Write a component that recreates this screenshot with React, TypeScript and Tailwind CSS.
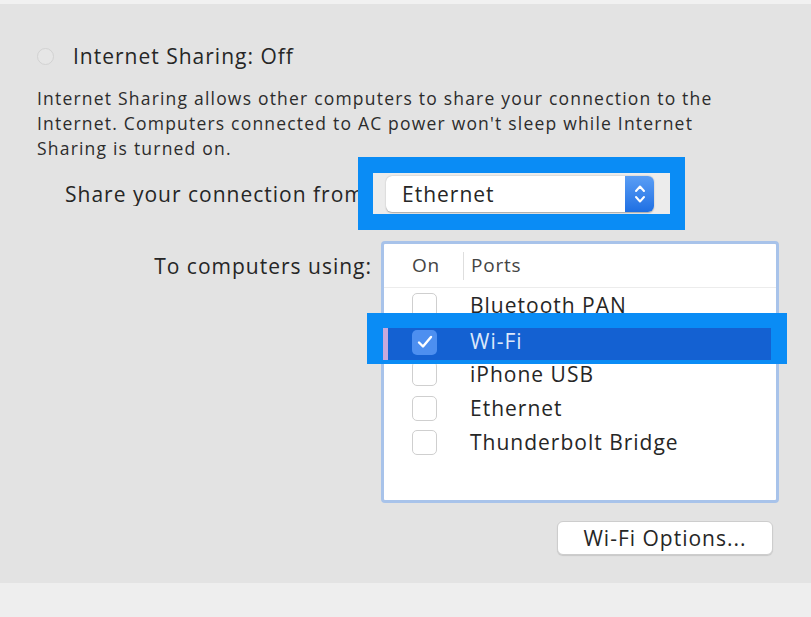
import React from "react";

const ports = ["Bluetooth PAN", "Wi-Fi", "iPhone USB", "Ethernet", "Thunderbolt Bridge"];

const Checkbox: React.FC<{ checked?: boolean }> = ({ checked }) =>
  checked ? (
    <div className="w-[25px] h-[25px] rounded-[5px] bg-[#4d8ff0] flex items-center justify-center">
      <svg width="16" height="14" viewBox="0 0 16 14">
        <path d="M2 7.5 L6 11.5 L14 2" fill="none" stroke="#ffffff" strokeWidth="2.4" strokeLinecap="round" strokeLinejoin="round" />
      </svg>
    </div>
  ) : (
    <div className="w-[25px] h-[25px] rounded-[5px] border border-[#cfcfcf] bg-white" />
  );

export default function App() {
  return (
    <div
      className="w-[811px] h-[617px] bg-[#e3e3e3] flex flex-col text-[#262626] overflow-hidden"
      style={{ fontFamily: '"Open Sans", "Liberation Sans", sans-serif' }}
    >
      <div className="h-[4px] bg-[#f1f1f1]" />
      <div className="flex-1 flex flex-col">
        {/* toggle */}
        <div className="mt-[40px] flex items-center h-[24px]">
          <div className="ml-[37px] w-[17px] h-[17px] rounded-full border border-[#d2d2d2] bg-[#e6e6e6]" />
          <span className="ml-[19px] text-[21px] leading-[24px] tracking-[1px]">Internet Sharing: Off</span>
        </div>

        <p className="mt-[18px] ml-[37px] whitespace-nowrap text-[17.5px] leading-[25px] tracking-[1.2px] text-[#2c2c2c]">
          Internet Sharing allows other computers to share your connection to the
          <br />
          Internet. Computers connected to AC power won't sleep while Internet
          <br />
          Sharing is turned on.
        </p>

        {/* share from */}
        <div className="-mt-[4px] flex items-center">
          <div className="ml-[65px] w-[293px] overflow-hidden whitespace-nowrap text-[21px] leading-[24px] tracking-[1px]">
            Share your connection from
          </div>
          <div className="border-[15px] border-t-[16px] border-b-[16px] border-[#0a8cf5] bg-[#ececec] w-[327px] pl-[13px] pr-[16px] pt-[3px] pb-[2px]">
            <div className="h-[36px] bg-white rounded-[6px] shadow-[0_0.5px_1.5px_rgba(0,0,0,0.3)] flex items-center">
              <span className="ml-[16px] flex-1 text-[21px] leading-[24px] tracking-[1px]">Ethernet</span>
              <div className="w-[29px] h-[36px] rounded-r-[6px] bg-gradient-to-b from-[#5a9ef5] to-[#1d6fe3] flex items-center justify-center">
                <svg width="14" height="24" viewBox="0 0 14 24">
                  <path d="M3 9 L7 4.5 L11 9" fill="none" stroke="#ffffff" strokeWidth="2" strokeLinecap="round" strokeLinejoin="round" />
                  <path d="M3 15 L7 19.5 L11 15" fill="none" stroke="#ffffff" strokeWidth="2" strokeLinecap="round" strokeLinejoin="round" />
                </svg>
              </div>
            </div>
          </div>
        </div>

        {/* to computers using */}
        <div className="mt-[11px] flex items-start">
          <div className="w-[372px] pt-[13px] text-right text-[21px] leading-[24px] tracking-[1px]">To computers using:</div>
          <div className="relative ml-[9px] w-[398px] h-[262px] border-[3px] border-[#a8c3ea] rounded-[4px] bg-white">
            <div className="h-[44px] flex items-center border-b border-[#ececec]">
              <span className="ml-[28px] w-[51px] text-[19px] tracking-[0.8px] text-[#444]">On</span>
              <div className="w-px h-[28px] bg-[#dedede]" />
              <span className="ml-[7px] text-[19px] tracking-[0.8px] text-[#444]">Ports</span>
            </div>
            {ports.map((p) => (
              <div key={p} className="h-[34.3px] flex items-center">
                <div className="ml-[28px]">
                  <Checkbox />
                </div>
                {p !== "Wi-Fi" && (
                  <span className="ml-[33px] text-[21px] leading-[24px] tracking-[1px]">{p}</span>
                )}
              </div>
            ))}

            {/* highlighted Wi-Fi row */}
            <div className="absolute left-[-17px] top-[69px] w-[420px] h-[51px] border-[#0a8cf5] border-t-[15px] border-l-[16px] border-r-[16px] border-b-[4px] bg-[#1461d2] flex items-center">
              <div className="w-[5px] h-full bg-[#c7a9dc]" />
              <div className="ml-[24px] mb-[4px]">
                <Checkbox checked />
              </div>
              <span className="ml-[33px] mb-[6px] text-[21px] leading-[24px] tracking-[1px] text-[#dce8fb]">Wi-Fi</span>
            </div>
          </div>
        </div>

        <div className="mt-[18px] flex">
          <button className="ml-[557px] w-[216px] h-[34px] bg-white rounded-[6px] border border-[#cdcdcd] shadow-[0_1px_1px_rgba(0,0,0,0.12)] text-[21px] leading-[24px] tracking-[1px] text-[#262626]">
            Wi-Fi Options...
          </button>
        </div>
      </div>
      <div className="h-[34px] bg-[#eeeeee]" />
    </div>
  );
}
